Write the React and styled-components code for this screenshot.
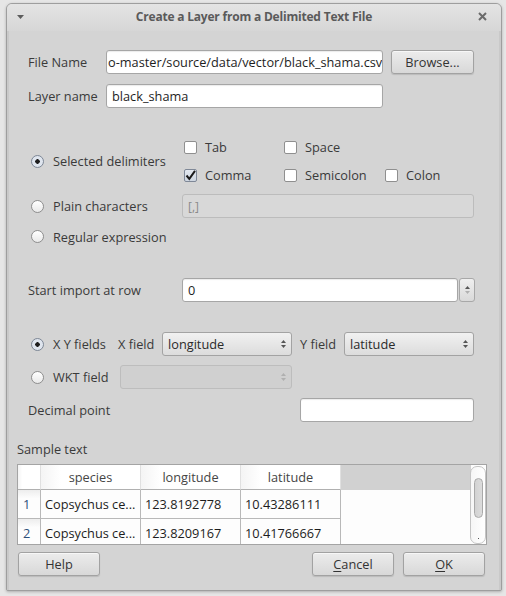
import React from 'react';
import styled, { createGlobalStyle, css } from 'styled-components';

const GlobalStyle = createGlobalStyle`
  html, body {
    margin: 0;
    padding: 0;
    background: #e6e6e6;
  }
  body {
    font-family: "Open Sans", "DejaVu Sans", sans-serif;
    font-size: 12.75px;
    color: #3a3a3a;
  }
`;

const Page = styled.div`
  width: 506px;
  height: 596px;
  box-sizing: border-box;
  padding: 3px 0 0 6px;
  overflow: hidden;
`;

const Window = styled.div`
  width: 496px;
  height: 588px;
  box-sizing: border-box;
  border: 1px solid #9e9e9e;
  border-radius: 6px 6px 2px 2px;
  background: #d4d4d4;
  display: flex;
  flex-direction: column;
  overflow: hidden;
  box-shadow: 0 1px 3px rgba(0, 0, 0, 0.25);
`;

const TitleBar = styled.div`
  height: 27px;
  box-sizing: border-box;
  padding-bottom: 2px;
  flex: none;
  display: grid;
  grid-template-columns: 28px 1fr 28px;
  align-items: center;
  background: linear-gradient(#e4e4e4, #d6d6d6);
`;

const Title = styled.div`
  text-align: center;
  font-weight: 700;
  font-size: 12px;
  letter-spacing: -0.2px;
  color: #5a5a5a;
`;

const Content = styled.div`
  flex: 1;
  display: flex;
  flex-direction: column;
  padding: 19px 26px 0 21px;
  box-shadow: inset 2px 0 0 #c9c9c9, inset -2px 0 0 #c9c9c9;
`;

const Row = styled.div`
  display: flex;
  align-items: center;
  height: ${({ h }) => h || 24}px;
  margin-top: ${({ mt }) => mt || 0}px;
`;

const Label = styled.span`
  width: ${({ w }) => (w ? `${w}px` : 'auto')};
  flex: none;
  white-space: nowrap;
`;

const fieldBase = css`
  box-sizing: border-box;
  height: 24px;
  border: 1px solid #a6a6a6;
  border-radius: 3px;
  display: flex;
  align-items: center;
  padding: 0 5px;
  overflow: hidden;
  white-space: nowrap;
`;

const Input = styled.div`
  ${fieldBase}
  width: ${({ w }) => w}px;
  flex: none;
  color: #1e1e1e;
  background: ${({ disabled }) => (disabled ? '#d8d8d8' : '#fff')};
  box-shadow: ${({ disabled }) => (disabled ? 'none' : 'inset 0 1px 1px rgba(0,0,0,0.08)')};
  border-color: ${({ disabled }) => (disabled ? '#bcbcbc' : '#a6a6a6')};
  padding-left: ${({ tight }) => (tight ? 1 : 5)}px;
`;

const Placeholder = styled.span`
  color: #8a8a8a;
  font-size: 12px;
`;

const Button = styled.div`
  box-sizing: border-box;
  width: ${({ w }) => w || 82}px;
  height: 24px;
  flex: none;
  border: 1px solid #a2a2a2;
  border-radius: 3px;
  background: linear-gradient(#ececec, #d8d8d8);
  box-shadow: 0 1px 1px rgba(0, 0, 0, 0.12), inset 0 1px 0 rgba(255, 255, 255, 0.6);
  display: flex;
  align-items: center;
  justify-content: center;
  color: #333;
  u {
    text-decoration-thickness: 1px;
    text-underline-offset: 2px;
  }
`;

const Combo = styled.div`
  ${fieldBase}
  width: ${({ w }) => w}px;
  flex: none;
  justify-content: space-between;
  color: #2a2a2a;
  background: ${({ disabled }) =>
    disabled ? '#d0d0d0' : 'linear-gradient(#f1f1f1, #dcdcdc)'};
  border-color: ${({ disabled }) => (disabled ? '#bdbdbd' : '#a3a3a3')};
  padding: 0 4px 0 5px;
`;

const Arrows = ({ light, downLight }) => (
  <svg width="7" height="12" viewBox="0 0 7 12">
    <path d="M3.5 2 L6 5 L1 5 Z" fill={light ? '#b0b0b0' : '#555'} />
    <path d="M3.5 10 L6 7 L1 7 Z" fill={light || downLight ? '#b0b0b0' : '#555'} />
  </svg>
);

const Spin = styled.div`
  box-sizing: border-box;
  width: 16px;
  height: 24px;
  margin-left: 1px;
  flex: none;
  border: 1px solid #a8a8a8;
  border-radius: 3px;
  background: linear-gradient(#efefef, #d9d9d9);
  display: flex;
  align-items: center;
  justify-content: center;
`;

const RadioItem = styled.span`
  display: flex;
  align-items: center;
  white-space: nowrap;
  width: ${({ w }) => (w ? `${w}px` : 'auto')};
  flex: none;
`;

const RadioCircle = styled.span`
  box-sizing: border-box;
  width: 13px;
  height: 13px;
  flex: none;
  border-radius: 50%;
  border: 1px solid ${({ on }) => (on ? '#7d8796' : '#8e8e8e')};
  background: ${({ on }) =>
    on ? 'radial-gradient(circle, #1e1e1e 0 2px, #dfe5ee 2.5px)' : 'linear-gradient(#ffffff, #e9e9e9)'};
  margin: 0 9px 0 3px;
`;

const Radio = ({ on, w, children }) => (
  <RadioItem w={w}>
    <RadioCircle on={on} />
    {children}
  </RadioItem>
);

const CheckItem = styled.span`
  display: flex;
  align-items: center;
  white-space: nowrap;
`;

const Box = styled.span`
  box-sizing: border-box;
  width: 13px;
  height: 13px;
  flex: none;
  border: 1px solid ${({ on }) => (on ? '#7f8897' : '#8f8f8f')};
  border-radius: 2px;
  background: ${({ on }) => (on ? 'linear-gradient(#e4e9f0, #cdd5e0)' : '#fff')};
  margin-right: 8px;
  display: flex;
  align-items: center;
  justify-content: center;
`;

const Check = ({ on, children }) => (
  <CheckItem>
    <Box on={on}>
      {on && (
        <svg width="11" height="11" viewBox="0 0 11 11">
          <path d="M1.5 5.5 L4.3 8.8 L10 0.8" fill="none" stroke="#1b1b1b" strokeWidth="2" />
        </svg>
      )}
    </Box>
    {children}
  </CheckItem>
);

const DelimGrid = styled.div`
  display: grid;
  grid-template-columns: 154px 1fr;
  grid-template-rows: 46px 24px 20px;
  row-gap: 10px;
  margin-top: 30px;
  align-items: center;
  & > :nth-child(5) {
    margin-top: -3px;
  }
`;

const CheckGrid = styled.div`
  display: grid;
  grid-template-columns: 100px 101px auto;
  grid-template-rows: 18px 18px;
  row-gap: 10px;
  margin-left: 2px;
  align-items: center;
`;

const SampleLabel = styled.div`
  margin: 18px 0 0 -11px;
  height: 18px;
  line-height: 18px;
`;

const TableFrame = styled.div`
  margin: 6px 0 0 -11px;
  width: 470px;
  height: 81px;
  box-sizing: border-box;
  border: 1px solid #a4a4a4;
  background: #fdfdfd;
  overflow: hidden;
  display: grid;
  grid-template-columns: 23px 100px 100px 100px 1fr 15px;
  grid-template-rows: 25px 29px 29px;
`;

const Cell = styled.div`
  box-sizing: border-box;
  border-right: 1px solid #b8b8b8;
  border-bottom: 1px solid #b8b8b8;
  display: flex;
  align-items: center;
  padding: 0 4px;
  white-space: nowrap;
  color: #1c1c1c;
  ${({ head }) =>
    head &&
    css`
      justify-content: center;
      color: #454545;
      background: linear-gradient(90deg, #f4f4f4, #ffffff 20%);
      border-color: #d8d8d8 #e0e0e0 #b0b0b0 transparent;
    `}
  ${({ num }) =>
    num &&
    css`
      color: #2d4f7a;
      background: linear-gradient(#ededed, #fdfdfd 30%);
      padding-left: 5px;
    `}
  ${({ empty }) =>
    empty &&
    css`
      border: none;
      background: ${({ gray }) => (gray ? '#d1d1d1' : '#fdfdfd')};
    `}
`;

const ScrollTrack = styled.div`
  grid-column: 6;
  grid-row: 1 / -1;
  margin: 1px 0 0 -1px;
  height: 78px;
  box-sizing: border-box;
  border: 1px solid #c4c4c4;
  border-radius: 7px;
  background: linear-gradient(90deg, #f6f6f6, #ffffff);
  display: flex;
  flex-direction: column;
  align-items: center;
  padding-top: 11px;
  position: relative;
`;

const ScrollThumb = styled.div`
  width: 9px;
  height: 40px;
  box-sizing: border-box;
  border: 1px solid #a9a9a9;
  border-radius: 5px;
  background: linear-gradient(90deg, #d2d2d2, #dcdcdc);
`;

const ScrollDot = styled.div`
  position: absolute;
  bottom: 4px;
  width: 1px;
  height: 1px;
  background: #555;
`;

const ButtonRow = styled.div`
  display: flex;
  margin: 7px 0 0 -10px;
  width: 467px;
  gap: 9px;
  & > :first-child {
    margin-right: auto;
  }
`;

const Gap = styled.span`
  width: ${({ w }) => w}px;
  flex: none;
`;

const rows = [
  ['1', 'Copsychus ce...', '123.8192778', '10.43286111'],
  ['2', 'Copsychus ce...', '123.8209167', '10.41766667'],
];

export default function App() {
  return (
    <Page>
      <GlobalStyle />
      <Window>
        <TitleBar>
          <svg width="28" height="12" viewBox="0 0 28 12">
            <path d="M10 4 L17 4 L13.5 8 Z" fill="#5c5c5c" />
          </svg>
          <Title>Create a Layer from a Delimited Text File</Title>
          <svg width="28" height="12" viewBox="0 0 28 12">
            <path d="M6 2 L13 9 M13 2 L6 9" stroke="#6a6a6a" strokeWidth="2" />
          </svg>
        </TitleBar>

        <Content>
          <Row>
            <Label w={78}>File Name</Label>
            <Input w={277} tight>
              o-master/source/data/vector/black_shama.csv
            </Input>
            <Gap w={8} />
            <Button w={83}>Browse...</Button>
          </Row>
          <Row mt={10}>
            <Label w={78}>Layer name</Label>
            <Input w={277}>black_shama</Input>
          </Row>

          <DelimGrid>
            <Radio on>Selected delimiters</Radio>
            <CheckGrid>
              <Check>Tab</Check>
              <Check>Space</Check>
              <span />
              <Check on>Comma</Check>
              <Check>Semicolon</Check>
              <Check>Colon</Check>
            </CheckGrid>
            <Radio>Plain characters</Radio>
            <Input w={292} disabled>
              <Placeholder>[,]</Placeholder>
            </Input>
            <Radio>Regular expression</Radio>
            <span />
          </DelimGrid>

          <Row mt={30}>
            <Label w={154}>Start import at row</Label>
            <Input w={276}>0</Input>
            <Spin>
              <Arrows downLight />
            </Spin>
          </Row>

          <Row mt={30}>
            <Radio on w={90}>X Y fields</Radio>
            <Label w={44}>X field</Label>
            <Combo w={130}>
              longitude
              <Arrows />
            </Combo>
            <Gap w={8} />
            <Label w={44}>Y field</Label>
            <Combo w={130}>
              latitude
              <Arrows />
            </Combo>
          </Row>
          <Row mt={9}>
            <Radio w={92}>WKT field</Radio>
            <Combo w={172} disabled>
              <span />
              <Arrows light />
            </Combo>
          </Row>
          <Row mt={9}>
            <Label w={272}>Decimal point</Label>
            <Input w={174} />
          </Row>

          <SampleLabel>Sample text</SampleLabel>
          <TableFrame>
            <Cell head />
            <Cell head>species</Cell>
            <Cell head>longitude</Cell>
            <Cell head>latitude</Cell>
            <Cell empty gray />
            <ScrollTrack>
              <ScrollThumb />
              <ScrollDot />
            </ScrollTrack>
            {rows.map((r) => (
              <React.Fragment key={r[0]}>
                <Cell num>{r[0]}</Cell>
                <Cell>{r[1]}</Cell>
                <Cell>{r[2]}</Cell>
                <Cell>{r[3]}</Cell>
                <Cell empty />
              </React.Fragment>
            ))}
          </TableFrame>

          <ButtonRow>
            <Button>Help</Button>
            <Button>
              <span>
                <u>C</u>ancel
              </span>
            </Button>
            <Button>
              <span>
                <u>O</u>K
              </span>
            </Button>
          </ButtonRow>
        </Content>
      </Window>
    </Page>
  );
}
